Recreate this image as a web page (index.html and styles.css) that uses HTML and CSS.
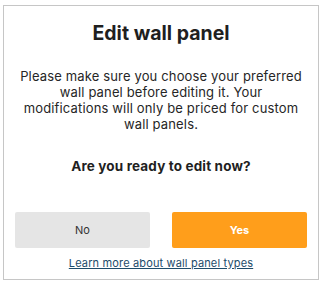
FILE: index.html
```html
<!DOCTYPE html>
<html lang="en">
<head>
<meta charset="utf-8">
<title>Edit wall panel</title>
<link rel="stylesheet" href="styles.css">
</head>
<body>
<div class="card">
  <h1 class="title">Edit wall panel</h1>
  <p class="message">Please make sure you choose your preferred wall panel before editing it. Your modifications will only be priced for custom wall panels.</p>
  <p class="question">Are you ready to edit now?</p>
  <div class="actions">
    <button class="btn btn-no" type="button">No</button>
    <button class="btn btn-yes" type="button">Yes</button>
  </div>
  <a class="learn" href="#">Learn more about wall panel types</a>
</div>
</body>
</html>
```
FILE: styles.css
```css
html, body {
  margin: 0;
  padding: 0;
  background: #ffffff;
}
body {
  font-family: Inter, "Open Sans", "DejaVu Sans", sans-serif;
  color: #222222;
}
.card {
  box-sizing: border-box;
  margin: 5px 0 0 3px;
  width: 316px;
  height: 275px;
  border: 1px solid #c6c6c6;
  padding: 15px 11px 0 11px;
  display: flex;
  flex-direction: column;
  align-items: center;
}
.title {
  margin: 0;
  font-size: 19.5px;
  line-height: 24px;
  font-weight: 700;
  color: #1f1f1f;
  text-align: center;
}
.message {
  margin: 23px 0 0 0;
  width: 288px;
  font-size: 13px;
  line-height: 16px;
  letter-spacing: 0.15px;
  text-align: center;
  color: #262626;
}
.question {
  margin: 26px 0 0 0;
  font-size: 13.5px;
  line-height: 16px;
  letter-spacing: 0.15px;
  font-weight: 700;
  text-align: center;
  color: #1f1f1f;
}
.actions {
  margin-top: 38px;
  align-self: stretch;
  display: flex;
  gap: 22px;
}
.btn {
  flex: 1;
  height: 36px;
  border: none;
  border-radius: 2px;
  font-family: inherit;
  font-size: 11px;
  padding: 0;
}
.btn-no {
  background: #e5e5e5;
  color: #333333;
}
.btn-yes {
  background: #ff9e1b;
  color: #ffffff;
  font-weight: 700;
}
.learn {
  margin-top: 8px;
  font-size: 11px;
  line-height: 14px;
  letter-spacing: 0.15px;
  color: #1d4c6b;
  text-decoration: underline;
}
```
